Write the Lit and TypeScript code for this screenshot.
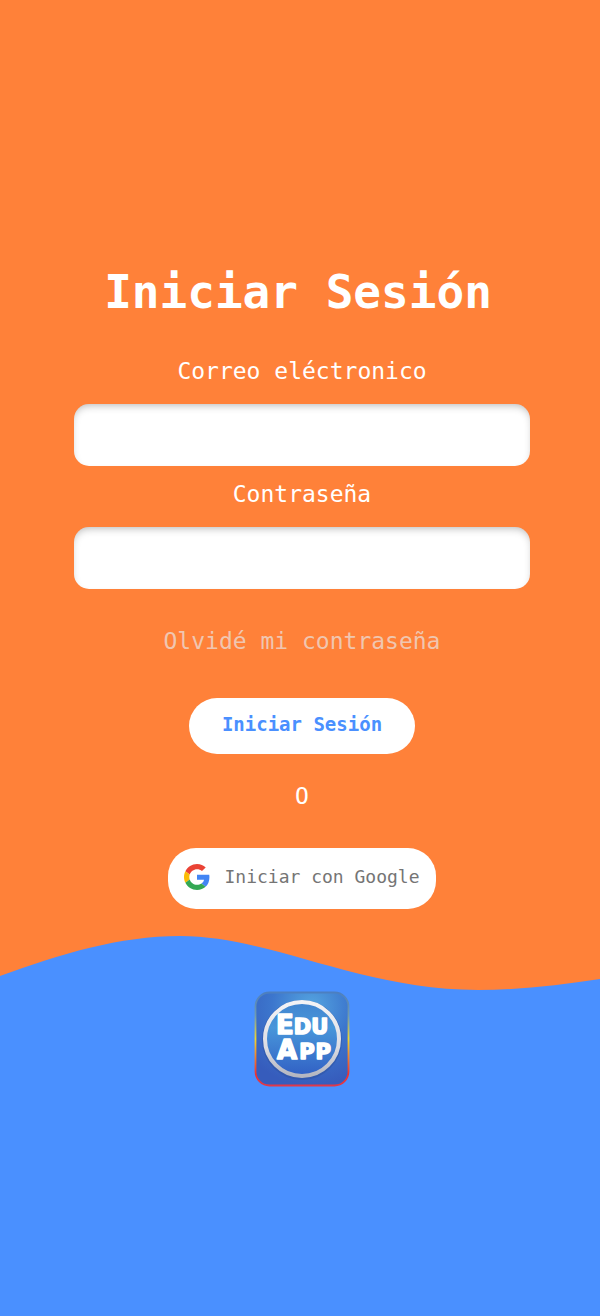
import { LitElement, html, css } from "lit";
import { customElement } from "lit/decorators.js";

@customElement("edu-logo")
export class EduLogo extends LitElement {
  static styles = css`
    :host {
      display: block;
      width: 96px;
      height: 96px;
    }
    svg {
      display: block;
      width: 100%;
      height: 100%;
    }
    .word {
      font-family: "DejaVu Sans", sans-serif;
      font-weight: 700;
      fill: #fff;
      stroke: #fff;
      stroke-width: 1.6;
      stroke-linejoin: round;
    }
    .cap {
      font-size: 26px;
    }
    .small {
      font-size: 21px;
    }
  `;

  render() {
    return html`
      <svg viewBox="0 0 96 96" role="img" aria-label="Edu App">
        <defs>
          <radialGradient id="face" cx="0.6" cy="0.15" r="0.85">
            <stop offset="0" stop-color="#55a5e0" />
            <stop offset="0.5" stop-color="#3c76cd" />
            <stop offset="1" stop-color="#365cbc" />
          </radialGradient>
          <linearGradient id="edge" x1="0" y1="0" x2="0" y2="1">
            <stop offset="0" stop-color="#4c7fc0" />
            <stop offset="0.25" stop-color="#6f9bb0" />
            <stop offset="0.5" stop-color="#f0d42e" />
            <stop offset="0.72" stop-color="#f0752c" />
            <stop offset="0.88" stop-color="#ee3030" />
            <stop offset="1" stop-color="#e0384a" />
          </linearGradient>
          <linearGradient id="ring" x1="0" y1="0" x2="0" y2="1">
            <stop offset="0" stop-color="#f4f4f6" />
            <stop offset="0.6" stop-color="#dcdde4" />
            <stop offset="1" stop-color="#b4b6c0" />
          </linearGradient>
          <linearGradient id="disc" x1="0" y1="0" x2="0" y2="1">
            <stop offset="0" stop-color="#4285d0" />
            <stop offset="0.35" stop-color="#4896da" />
            <stop offset="1" stop-color="#3160c4" />
          </linearGradient>
        </defs>
        <rect x="1.5" y="1.5" width="93" height="93" rx="14" fill="url(#face)" stroke="url(#edge)" stroke-width="1.8" />
        <circle cx="48" cy="49" r="37.5" fill="none" stroke="#2c4f9c" stroke-opacity="0.45" stroke-width="5" />
        <circle cx="48" cy="48" r="37" fill="url(#disc)" stroke="url(#ring)" stroke-width="4" />
        <text class="word"><tspan class="cap" x="22" y="43">E</tspan><tspan class="small">DU</tspan><tspan class="cap" x="23" y="68">A</tspan><tspan class="small" dx="2">P</tspan><tspan class="small" dx="1">P</tspan></text>
      </svg>
    `;
  }
}

@customElement("app-root")
export class AppRoot extends LitElement {
  static styles = css`
    :host {
      display: flex;
      flex-direction: column;
      min-height: 100vh;
      box-sizing: border-box;
      background: #ff8139;
      color: #fff;
      font-family: "DejaVu Sans Mono", monospace;
      font-size: 23px;
      line-height: 28px;
    }
    .login {
      display: flex;
      flex-direction: column;
      align-items: center;
      padding: 264px calc(12% - 2px) 27px calc(12% + 2px);
    }
    .title {
      margin: 0 0 37px;
      padding-right: 8px;
      font-size: 46px;
      line-height: 56px;
      font-weight: 700;
      text-align: center;
    }
    .field {
      display: flex;
      flex-direction: column;
      align-items: center;
      gap: 19px;
      width: 100%;
      margin-bottom: 14px;
    }
    .input {
      box-sizing: border-box;
      width: 100%;
      height: 62px;
      padding: 0 20px;
      border: 0;
      border-radius: 15px;
      background: #fff;
      box-shadow: inset 0 4px 8px -3px rgba(0, 0, 0, 0.3);
      color: #444;
      font: inherit;
    }
    .forgot {
      margin: 24px 0 43px;
      color: #f0c6b0;
      text-decoration: none;
      text-align: center;
    }
    .button {
      display: flex;
      align-items: center;
      justify-content: center;
      border: 0;
      border-radius: 28px;
      background: #fff;
      font-family: inherit;
      cursor: pointer;
    }
    .submit {
      padding: 12px 33px 16px;
      color: #4a90ff;
      font-size: 19px;
      line-height: 28px;
      font-weight: 700;
    }
    .or {
      margin: 28px 0 38px;
    }
    .google {
      gap: 14px;
      padding: 14px 16px 18px;
      color: #757575;
      font-size: 18px;
      line-height: 29px;
    }
    .google-icon {
      width: 26px;
      height: 26px;
      flex: none;
    }
    .wave {
      display: block;
      width: 100%;
      height: 55px;
      fill: #4a90ff;
    }
    .footer {
      display: flex;
      justify-content: center;
      flex: 1;
      padding-left: 4px;
      background: #4a90ff;
    }
  `;

  render() {
    return html`
      <form class="login" @submit=${(e: Event) => e.preventDefault()}>
        <h1 class="title">Iniciar Sesión</h1>
        <div class="field">
          <label for="email">Correo eléctronico</label>
          <input class="input" id="email" type="email" autocomplete="email" />
        </div>
        <div class="field">
          <label for="password">Contraseña</label>
          <input class="input" id="password" type="password" autocomplete="current-password" />
        </div>
        <a class="forgot" href="#">Olvidé mi contraseña</a>
        <button class="button submit" type="submit">Iniciar Sesión</button>
        <span class="or">O</span>
        <button class="button google" type="button">
          <svg class="google-icon" viewBox="0 0 48 48" aria-hidden="true">
            <path fill="#EA4335" d="M24 9.5c3.54 0 6.71 1.22 9.21 3.6l6.85-6.85C35.9 2.38 30.47 0 24 0 14.62 0 6.51 5.38 2.56 13.22l7.98 6.19C12.43 13.72 17.74 9.5 24 9.5z" />
            <path fill="#4285F4" d="M46.98 24.55c0-1.57-.15-3.09-.38-4.55H24v9.02h12.94c-.58 2.96-2.26 5.48-4.78 7.18l7.73 6c4.51-4.18 7.09-10.36 7.09-17.65z" />
            <path fill="#FBBC05" d="M10.53 28.59c-.48-1.45-.76-2.99-.76-4.59s.27-3.14.76-4.59l-7.98-6.19C.92 16.46 0 20.12 0 24c0 3.88.92 7.54 2.56 10.78l7.97-6.19z" />
            <path fill="#34A853" d="M24 48c6.48 0 11.93-2.13 15.89-5.81l-7.73-6c-2.15 1.45-4.92 2.3-8.16 2.3-6.26 0-11.57-4.22-13.47-9.91l-7.98 6.19C6.51 42.62 14.62 48 24 48z" />
          </svg>
          <span>Iniciar con Google</span>
        </button>
      </form>
      <svg class="wave" viewBox="0 0 600 55" preserveAspectRatio="none" aria-hidden="true">
        <path d="M0 40C60 18 120 0 180 0C270 0 360 54 478 54C520 54 560 49 600 43V55H0Z" />
      </svg>
      <footer class="footer">
        <edu-logo></edu-logo>
      </footer>
    `;
  }
}
